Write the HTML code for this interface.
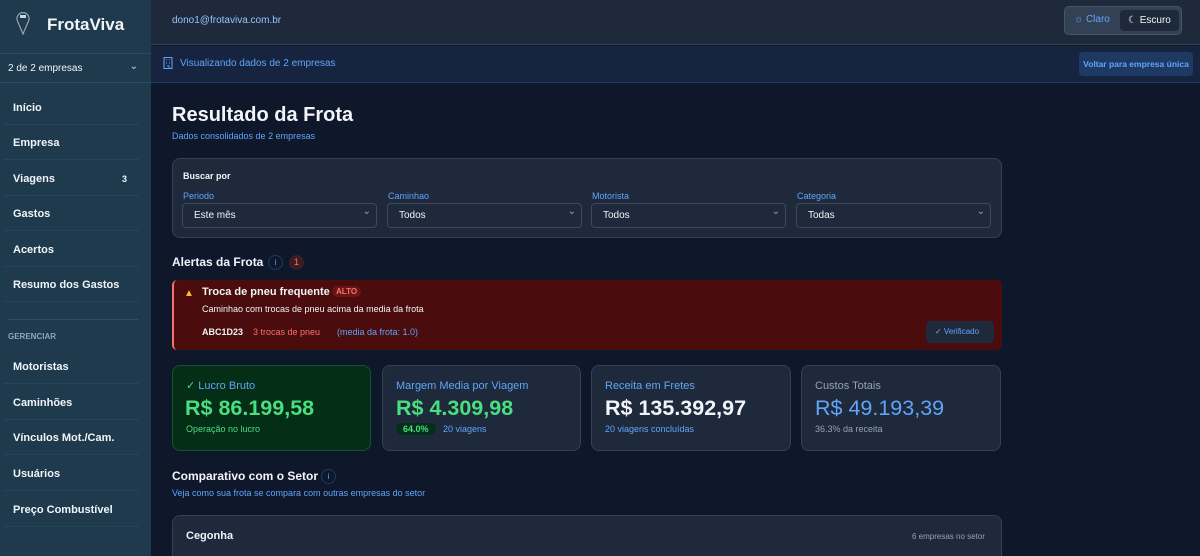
<!DOCTYPE html>
<html><head><meta charset="utf-8"><style>
*{box-sizing:border-box;margin:0;padding:0}
html,body{width:1200px;height:556px;overflow:hidden}
body{background:#0f172a;font-family:"Liberation Sans",sans-serif;color:#f1f5f9;position:relative}
.sb{position:absolute;left:0;top:0;width:151px;height:556px;background:#1e3a4c}
.abs{position:absolute}
.nav{position:absolute;left:4px;width:135px;height:35px;border-bottom:1px solid #24465a;font-size:11px;font-weight:bold;color:#f1f5f9;padding-left:9px;line-height:37px}
.hdr{position:absolute;left:151px;top:0;width:1049px;height:45px;background:#1e293b;border-bottom:1px solid #334155}
.ban{position:absolute;left:151px;top:46px;width:1049px;height:37px;background:#172440;border-bottom:1px solid #1e3a5f}
.card{position:absolute;background:#1e293b;border:1px solid #334155;border-radius:8px}
.lbl{font-size:9px;color:#60a5fa;position:absolute}
.sel{position:absolute;top:203px;height:25px;background:#1e293b;border:1px solid #3b4a60;border-radius:4px;font-size:10px;color:#f1f5f9;padding-left:11px;line-height:23px}
.sel:after{content:"⌄";position:absolute;right:5px;top:-4px;color:#94a3b8;font-size:10px}
.val{position:absolute;top:396px;font-size:21.5px;font-weight:bold}
</style></head><body>
<div class="sb">
 <svg class="abs" style="left:16px;top:11px" width="14" height="24" viewBox="0 0 14 24"><path d="M7 23 L1.5 10 A6 6 0 1 1 12.5 10 Z" fill="none" stroke="#94a3b8" stroke-width="1.2"/><rect x="4" y="4" width="6" height="3" fill="#cbd5e1"/></svg>
 <div class="abs" style="left:47px;top:15px;font-size:17px;font-weight:bold">FrotaViva</div>
 <div class="abs" style="left:0;top:53px;width:151px;height:30px;border-top:1px solid #2a4a5e;border-bottom:1px solid #2a4a5e;font-size:10px;line-height:29px;padding-left:8px">2 de 2 empresas<span style="position:absolute;right:13px;top:-2px;color:#cbd5e1">⌄</span></div>
 <div class="nav" style="top:90px">Início</div>
 <div class="nav" style="top:125px">Empresa</div>
 <div class="nav" style="top:161px">Viagens<span style="position:absolute;right:12px;font-size:9px">3</span></div>
 <div class="nav" style="top:196px">Gastos</div>
 <div class="nav" style="top:232px">Acertos</div>
 <div class="nav" style="top:267px">Resumo dos Gastos</div>
 <div class="abs" style="left:8px;top:319px;width:130px;border-top:1px solid #2c4f63"></div>
 <div class="abs" style="left:8px;top:332px;font-size:8px;font-weight:bold;color:#94a3b8">GERENCIAR</div>
 <div class="nav" style="top:349px">Motoristas</div>
 <div class="nav" style="top:385px">Caminhões</div>
 <div class="nav" style="top:420px">Vínculos Mot./Cam.</div>
 <div class="nav" style="top:456px">Usuários</div>
 <div class="nav" style="top:492px">Preço Combustível</div>
</div>
<div class="hdr">
 <div class="abs" style="left:21px;top:15px;font-size:10px;color:#93c5fd">dono1@frotaviva.com.br</div>
 <div class="abs" style="left:913px;top:6px;width:118px;height:29px;background:#334155;border:1px solid #475569;border-radius:5px"></div>
 <div class="abs" style="left:923px;top:14px;font-size:10px;color:#60a5fa">☼ Claro</div>
 <div class="abs" style="left:969px;top:10px;width:59px;height:21px;background:#1e293b;border-radius:4px;font-size:10px;line-height:21px;padding-left:8px">☾ Escuro</div>
</div>
<div class="ban">
 <svg class="abs" style="left:12px;top:11px" width="10" height="12" viewBox="0 0 10 12"><rect x="1" y="0.5" width="8" height="11" fill="none" stroke="#60a5fa"/><path d="M3 3h1M6 3h1M3 6h1M6 6h1M4 9h2v3" stroke="#60a5fa"/></svg>
 <div class="abs" style="left:29px;top:12px;font-size:10px;color:#60a5fa">Visualizando dados de 2 empresas</div>
 <div class="abs" style="left:928px;top:6px;width:114px;height:24px;background:#1e3a63;border-radius:4px;font-size:8.5px;font-weight:bold;color:#60a5fa;text-align:center;line-height:24px">Voltar para empresa única</div>
</div>
<div class="abs" style="left:172px;top:104px;font-size:20px;font-weight:bold">Resultado da Frota</div>
<div class="abs" style="left:172px;top:131px;font-size:9px;color:#60a5fa">Dados consolidados de 2 empresas</div>
<div class="card" style="left:172px;top:158px;width:830px;height:80px"></div>
<div class="abs" style="left:183px;top:171px;font-size:9px;font-weight:bold">Buscar por</div>
<div class="lbl" style="left:183px;top:191px">Periodo</div>
<div class="lbl" style="left:388px;top:191px">Caminhao</div>
<div class="lbl" style="left:592px;top:191px">Motorista</div>
<div class="lbl" style="left:797px;top:191px">Categoria</div>
<div class="sel" style="left:182px;width:195px">Este mês</div>
<div class="sel" style="left:387px;width:195px">Todos</div>
<div class="sel" style="left:591px;width:195px">Todos</div>
<div class="sel" style="left:796px;width:195px">Todas</div>
<div class="abs" style="left:172px;top:255px;font-size:12px;font-weight:bold">Alertas da Frota</div>
<div class="abs" style="left:268px;top:255px;width:15px;height:15px;border:1px solid #1e3a63;border-radius:50%;font-size:8px;color:#60a5fa;text-align:center;line-height:13px">i</div>
<div class="abs" style="left:289px;top:255px;width:15px;height:15px;background:#3a1e24;border-radius:50%;font-size:9px;color:#f87171;text-align:center;line-height:15px">1</div>
<div class="abs" style="left:172px;top:280px;width:830px;height:70px;background:#4a0c0c;border-left:2px solid #f87171;border-radius:5px"></div>
<div class="abs" style="left:184px;top:288px;font-size:10px;color:#fbbf24">▲</div>
<div class="abs" style="left:202px;top:286px;font-size:11px;font-weight:bold">Troca de pneu frequente</div>
<div class="abs" style="left:332px;top:286px;padding:1px 4px;background:#6b1414;border-radius:6px;font-size:8px;font-weight:bold;color:#f87171">ALTO</div>
<div class="abs" style="left:202px;top:304px;font-size:9px">Caminhao com trocas de pneu acima da media da frota</div>
<div class="abs" style="left:202px;top:327px;font-size:9px;font-weight:bold">ABC1D23</div>
<div class="abs" style="left:253px;top:327px;font-size:9px;color:#f87171">3 trocas de pneu</div>
<div class="abs" style="left:337px;top:327px;font-size:9px;color:#60a5fa">(media da frota: 1.0)</div>
<div class="abs" style="left:926px;top:321px;width:68px;height:22px;background:#1e293b;border-radius:4px;font-size:8px;color:#60a5fa;line-height:22px;padding-left:9px"><span style="color:#94a3b8">✓</span> Verificado</div>

<div class="card" style="left:172px;top:365px;width:199px;height:86px;background:#052e16;border-color:#14532d"></div>
<div class="abs" style="left:186px;top:379px;font-size:11px;color:#4ade80">✓ <span style="color:#60a5fa">Lucro Bruto</span></div>
<div class="val" style="left:185px;color:#4ade80">R$ 86.199,58</div>
<div class="abs" style="left:186px;top:424px;font-size:9px;color:#4ade80">Operação no lucro</div>

<div class="card" style="left:382px;top:365px;width:199px;height:86px"></div>
<div class="abs" style="left:396px;top:380px;font-size:11px;color:#60a5fa">Margem Media por Viagem</div>
<div class="val" style="left:396px;color:#4ade80">R$ 4.309,98</div>
<div class="abs" style="left:396px;top:423px;padding:1px 7px;background:#052e16;border-radius:8px;font-size:9px;font-weight:bold;color:#4ade80">64.0%</div>
<div class="abs" style="left:443px;top:424px;font-size:9px;color:#60a5fa">20 viagens</div>

<div class="card" style="left:591px;top:365px;width:200px;height:86px"></div>
<div class="abs" style="left:605px;top:380px;font-size:11px;color:#60a5fa">Receita em Fretes</div>
<div class="val" style="left:605px">R$ 135.392,97</div>
<div class="abs" style="left:605px;top:424px;font-size:9px;color:#60a5fa">20 viagens concluídas</div>

<div class="card" style="left:801px;top:365px;width:200px;height:86px"></div>
<div class="abs" style="left:815px;top:380px;font-size:11px;color:#94a3b8">Custos Totais</div>
<div class="val" style="left:815px;color:#60a5fa;font-weight:normal">R$ 49.193,39</div>
<div class="abs" style="left:815px;top:424px;font-size:9px;color:#94a3b8">36.3% da receita</div>

<div class="abs" style="left:172px;top:469px;font-size:12px;font-weight:bold">Comparativo com o Setor</div>
<div class="abs" style="left:321px;top:469px;width:15px;height:15px;border:1px solid #1e3a63;border-radius:50%;font-size:8px;color:#60a5fa;text-align:center;line-height:13px">i</div>
<div class="abs" style="left:172px;top:488px;font-size:9px;color:#60a5fa">Veja como sua frota se compara com outras empresas do setor</div>
<div class="card" style="left:172px;top:515px;width:830px;height:41px;border-bottom:none;border-radius:8px 8px 0 0"></div>
<div class="abs" style="left:186px;top:530px;font-size:11px;font-weight:bold">Cegonha</div>
<div class="abs" style="left:912px;top:532px;font-size:8px;color:#94a3b8">6 empresas no setor</div>
</body></html>
